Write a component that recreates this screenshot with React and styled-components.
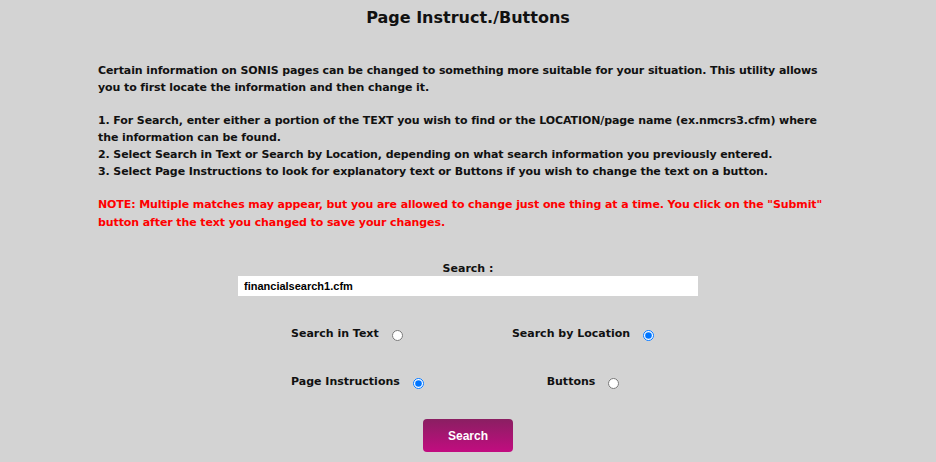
import React from "react"
import styled, { createGlobalStyle } from "styled-components"

const Global = createGlobalStyle`
  html, body { margin: 0; padding: 0; background: #d3d3d3; }
  body { font-family: "DejaVu Sans", "Liberation Sans", sans-serif; }
`

const Page = styled.div`
  width: 936px;
  height: 462px;
  background: #d3d3d3;
  overflow: hidden;
  display: flex;
  flex-direction: column;
  align-items: center;
`

const Title = styled.h1`
  margin: 7px 0 0;
  font-size: 16px;
  font-weight: bold;
  color: #111;
  line-height: 22px;
`

const Intro = styled.div`
  width: 740px;
  margin-top: 33px;
  font-size: 11px;
  letter-spacing: -0.1px;
  font-weight: bold;
  line-height: 17px;
  color: #111;
`

const Para = styled.p`
  margin: 0 0 16px;
  color: ${p => p.$red ? "#ff0000" : "#111"};
  line-height: ${p => p.$red ? "18px" : "17px"};
`

const Form = styled.div`
  display: flex;
  flex-direction: column;
  align-items: center;
  margin-top: 14px;
`

const Label = styled.div`
  font-size: 11px;
  font-weight: bold;
  line-height: 14px;
  color: #111;
`

const TextBox = styled.input`
  width: 460px;
  height: 20px;
  box-sizing: border-box;
  margin-top: 0;
  border: none;
  background: #fff;
  padding: 0 6px;
  font-family: "Liberation Sans", Arial, sans-serif;
  font-weight: bold;
  font-size: 11px;
  color: #000;
  outline: none;
`

const Options = styled.div`
  display: grid;
  grid-template-columns: 216px 152px;
  row-gap: 33px;
  margin-top: 30px;
  margin-left: 14px;
`

const Option = styled.label`
  display: flex;
  align-items: center;
  gap: 13px;
  justify-self: ${p => p.$align || "start"};
  font-size: 11px;
  font-weight: bold;
  color: #111;
  input { margin: 4px 0 0; width: 11px; height: 11px; }
`

const SubmitButton = styled.button`
  margin-top: 30px;
  width: 90px;
  height: 33px;
  border: none;
  border-radius: 4px;
  background: linear-gradient(#8a1f62, #c20c80);
  color: #fff;
  font-family: "Liberation Sans", Arial, sans-serif;
  font-weight: bold;
  font-size: 12px;
`

export default function App() {
  return (
    <Page>
      <Global />
      <Title>Page Instruct./Buttons</Title>
      <Intro>
        <Para>
          Certain information on SONIS pages can be changed to something more suitable for your situation. This utility allows you to first locate the information and then change it.
        </Para>
        <Para>
          1. For Search, enter either a portion of the TEXT you wish to find or the LOCATION/page name (ex.nmcrs3.cfm) where the information can be found.<br />
          2. Select Search in Text or Search by Location, depending on what search information you previously entered.<br />
          3. Select Page Instructions to look for explanatory text or Buttons if you wish to change the text on a button.
        </Para>
        <Para $red>
          NOTE: Multiple matches may appear, but you are allowed to change just one thing at a time. You click on the "Submit" button after the text you changed to save your changes.
        </Para>
      </Intro>
      <Form>
        <Label>Search :</Label>
        <TextBox defaultValue="financialsearch1.cfm" />
        <Options>
          <Option>Search in Text <input type="radio" name="t" /></Option>
          <Option $align="center">Search by Location <input type="radio" name="t" defaultChecked /></Option>
          <Option>Page Instructions <input type="radio" name="p" defaultChecked /></Option>
          <Option $align="center">Buttons <input type="radio" name="p" /></Option>
        </Options>
        <SubmitButton>Search</SubmitButton>
      </Form>
    </Page>
  )
}
